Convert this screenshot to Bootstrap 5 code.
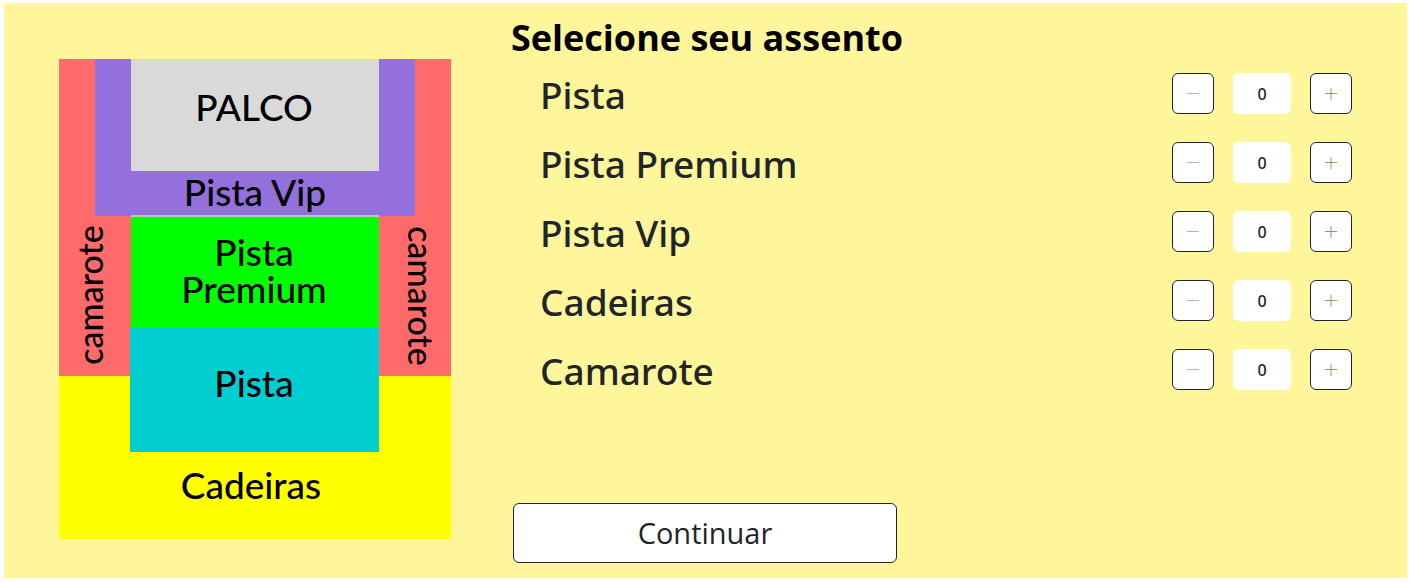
<!DOCTYPE html>
<html lang="pt-BR">
<head>
<meta charset="utf-8">
<meta name="viewport" content="width=device-width, initial-scale=1">
<title>Selecione seu assento</title>
<link href="https://cdn.jsdelivr.net/npm/bootstrap@5.3.0/dist/css/bootstrap.min.css" rel="stylesheet">
<style>
  body { font-family: "Noto Sans", "Open Sans", sans-serif; padding: 3px 2px 4px 4px; }
  .booking { background: #fff59b; padding: 11px 55px 15px; gap: 60px; }
  .venue { flex: 0 1 392px; margin-top: 45px; }
  .venue svg { display: block; width: 100%; height: auto; }
  .venue text { font-family: Lato, sans-serif; font-size: 37px; font-weight: 500; text-anchor: middle; }
  .venue .side-label { font-size: 34px; }
  .booking h1 { font-family: "Open Sans", sans-serif; font-size: 36px; font-weight: 700; line-height: 48px; color: #000; }
  .sectors { padding-left: 29px; margin-top: 9px; }
  .sector { height: 48px; margin-bottom: 21px; }
  .sector label { font-size: 37px; font-weight: 500; line-height: 48px; }
  .stepper { gap: 19px; padding-top: 2px; }
  .step, .qty { height: 41px; font-size: 16px; border-radius: 6px; }
  .step { width: 42px; background: #fff; border: 1px solid #212529; color: #b8b0b8; }
  .step.plus { color: #b08a6a; }
  .step svg { display: block; margin: auto; }
  .qty { width: 58px; border: 0; background: #fff; color: #212529; font-weight: 500; text-align: center; padding: 0; }
  .proceed { width: 384px; max-width: 100%; height: 60px; margin: 87px 0 0 2px; padding: 0; font-family: "Open Sans", sans-serif; font-size: 29px; background: #fff; border-color: #212529; }
  @media (max-width: 991px) { .booking { flex-wrap: wrap; padding-left: 16px; padding-right: 16px; } }
</style>
</head>
<body>
<main class="booking d-flex align-items-start">
  <div class="venue">
    <svg viewBox="0 0 392 480" role="img" aria-label="Mapa dos setores">
      <rect width="392" height="480" fill="#ffff00"/>
      <rect width="392" height="317" fill="#ff6b6b"/>
      <rect x="36" width="320" height="157" fill="#9370db"/>
      <rect x="72" width="248" height="112" fill="#d9d9d9"/>
      <rect x="72" y="156" width="248" height="2" fill="#b9c9b0"/>
      <rect x="72" y="158" width="248" height="111" fill="#00ff00"/>
      <rect x="71" y="269" width="249" height="124" fill="#00ced1"/>
      <text x="195" y="62">PALCO</text>
      <text x="196" y="147">Pista Vip</text>
      <text x="195" y="207">Pista</text>
      <text x="195" y="244">Premium</text>
      <text x="195" y="338">Pista</text>
      <text x="192" y="440">Cadeiras</text>
      <text class="side-label" transform="translate(44 236) rotate(-90)">camarote</text>
      <text class="side-label" transform="translate(349 237) rotate(90)">camarote</text>
    </svg>
  </div>
  <form class="flex-grow-1" onsubmit="return false">
    <h1 class="mb-0">Selecione seu assento</h1>
    <div class="sectors">
      <div class="sector d-flex justify-content-between align-items-start">
        <label for="pista">Pista</label>
        <div class="stepper d-flex">
          <button type="button" class="step p-0" aria-label="Diminuir Pista"><svg width="12" height="12" stroke="currentColor"><path d="M0 5.500H12"/></svg></button>
          <input class="qty" id="pista" type="text" inputmode="numeric" value="0">
          <button type="button" class="step plus p-0" aria-label="Aumentar Pista"><svg width="12" height="12" stroke="currentColor"><path d="M0 5.500H12M6 0V12"/></svg></button>
        </div>
      </div>
      <div class="sector d-flex justify-content-between align-items-start">
        <label for="premium">Pista Premium</label>
        <div class="stepper d-flex">
          <button type="button" class="step p-0" aria-label="Diminuir Pista Premium"><svg width="12" height="12" stroke="currentColor"><path d="M0 5.500H12"/></svg></button>
          <input class="qty" id="premium" type="text" inputmode="numeric" value="0">
          <button type="button" class="step plus p-0" aria-label="Aumentar Pista Premium"><svg width="12" height="12" stroke="currentColor"><path d="M0 5.500H12M6 0V12"/></svg></button>
        </div>
      </div>
      <div class="sector d-flex justify-content-between align-items-start">
        <label for="vip">Pista Vip</label>
        <div class="stepper d-flex">
          <button type="button" class="step p-0" aria-label="Diminuir Pista Vip"><svg width="12" height="12" stroke="currentColor"><path d="M0 5.500H12"/></svg></button>
          <input class="qty" id="vip" type="text" inputmode="numeric" value="0">
          <button type="button" class="step plus p-0" aria-label="Aumentar Pista Vip"><svg width="12" height="12" stroke="currentColor"><path d="M0 5.500H12M6 0V12"/></svg></button>
        </div>
      </div>
      <div class="sector d-flex justify-content-between align-items-start">
        <label for="cadeiras">Cadeiras</label>
        <div class="stepper d-flex">
          <button type="button" class="step p-0" aria-label="Diminuir Cadeiras"><svg width="12" height="12" stroke="currentColor"><path d="M0 5.500H12"/></svg></button>
          <input class="qty" id="cadeiras" type="text" inputmode="numeric" value="0">
          <button type="button" class="step plus p-0" aria-label="Aumentar Cadeiras"><svg width="12" height="12" stroke="currentColor"><path d="M0 5.500H12M6 0V12"/></svg></button>
        </div>
      </div>
      <div class="sector d-flex justify-content-between align-items-start">
        <label for="camarote">Camarote</label>
        <div class="stepper d-flex">
          <button type="button" class="step p-0" aria-label="Diminuir Camarote"><svg width="12" height="12" stroke="currentColor"><path d="M0 5.500H12"/></svg></button>
          <input class="qty" id="camarote" type="text" inputmode="numeric" value="0">
          <button type="button" class="step plus p-0" aria-label="Aumentar Camarote"><svg width="12" height="12" stroke="currentColor"><path d="M0 5.500H12M6 0V12"/></svg></button>
        </div>
      </div>
    </div>
    <button type="submit" class="btn proceed">Continuar</button>
  </form>
</main>
<script src="https://cdn.jsdelivr.net/npm/bootstrap@5.3.0/dist/js/bootstrap.bundle.min.js"></script>
</body>
</html>
